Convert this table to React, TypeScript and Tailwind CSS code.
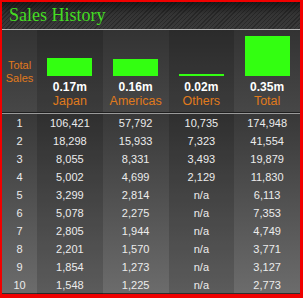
import React from "react";

const cols = [
  { name: "Japan", value: "0.17m", h: 18, dark: true },
  { name: "Americas", value: "0.16m", h: 17, dark: false },
  { name: "Others", value: "0.02m", h: 2, dark: true },
  { name: "Total", value: "0.35m", h: 40, dark: false },
];

const rows = [
  ["1", "106,421", "57,792", "10,735", "174,948"],
  ["2", "18,298", "15,933", "7,323", "41,554"],
  ["3", "8,055", "8,331", "3,493", "19,879"],
  ["4", "5,002", "4,699", "2,129", "11,830"],
  ["5", "3,299", "2,814", "n/a", "6,113"],
  ["6", "5,078", "2,275", "n/a", "7,353"],
  ["7", "2,805", "1,944", "n/a", "4,749"],
  ["8", "2,201", "1,570", "n/a", "3,771"],
  ["9", "1,854", "1,273", "n/a", "3,127"],
  ["10", "1,548", "1,225", "n/a", "2,773"],
];

export default function App() {
  return (
    <div className="w-[303px] h-[298px] bg-[#f00000] pl-[2px] pt-[2px] pr-[3px] pb-[4px] font-['Liberation_Sans',Arial,sans-serif]">
      <div className="flex flex-col h-full w-full">
        <div className="relative h-[27px] flex items-center pl-[7px] pb-[2px] bg-[repeating-linear-gradient(135deg,#2b2b2b_0px,#2b2b2b_1px,#3a3a3a_1px,#3a3a3a_3px)]">
          <div className="absolute inset-0 bg-[linear-gradient(to_bottom,rgba(0,0,0,0.55),rgba(0,0,0,0.1)_45%,rgba(0,0,0,0))]" />
          <span className="relative font-['Liberation_Serif',Georgia,serif] text-[18px] leading-none text-[#44dd22]">
            Sales History
          </span>
        </div>
        <div className="h-[1px] bg-[#b4b4b4]" />
        <div className="h-[82px] grid grid-cols-[35px_repeat(4,1fr)] bg-[linear-gradient(to_bottom,#333333,#474747)]">
          <div className="flex flex-col items-center justify-center text-[11px] leading-[13px] text-[#e07a1c] pt-[1px]">
            <span>Total</span>
            <span>Sales</span>
          </div>
          {cols.map((c) => (
            <div
              key={c.name}
              className={`flex flex-col items-center justify-end pb-[4px] ${c.dark ? "bg-black/15" : ""}`}
            >
              <div className="w-[45px] bg-[#33ff11]" style={{ height: c.h }} />
              <div className="mt-[4px] text-[12px] leading-[14px] font-bold text-white">{c.value}</div>
              <div className="text-[12.5px] leading-[14px] text-[#e07a1c]">{c.name}</div>
            </div>
          ))}
        </div>
        <div className="h-[1px] bg-[#1e1e1e]" />
        <div className="h-[1px] bg-[#9a9a9a]" />
        <div className="flex-1 relative bg-[linear-gradient(to_bottom,#383838,#6c6c6c)] shadow-[inset_0_-1px_0_#2e2e2e]">
          <div className="absolute inset-0 grid grid-cols-[35px_repeat(4,1fr)] pointer-events-none">
            <div />
            <div className="bg-black/15" />
            <div />
            <div className="bg-black/15 mb-[1px]" />
            <div />
          </div>
          <div className="relative">
            {rows.map((r) => (
              <div key={r[0]} className="grid grid-cols-[35px_repeat(4,1fr)] h-[18px] items-center text-[11px] text-[#ececec]">
                {r.map((v, i) => (
                  <div key={i} className="text-center leading-[18px]">
                    {v}
                  </div>
                ))}
              </div>
            ))}
          </div>
        </div>
      </div>
    </div>
  );
}
